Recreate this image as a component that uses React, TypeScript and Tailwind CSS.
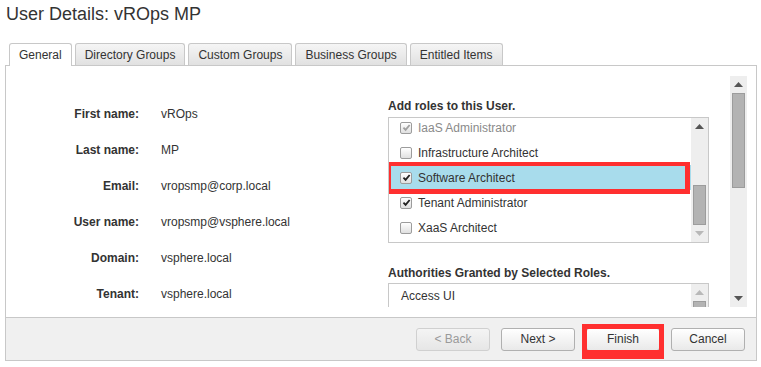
const tabs = ["General", "Directory Groups", "Custom Groups", "Business Groups", "Entitled Items"];

const details = [
  ["First name:", "vROps"],
  ["Last name:", "MP"],
  ["Email:", "vropsmp@corp.local"],
  ["User name:", "vropsmp@vsphere.local"],
  ["Domain:", "vsphere.local"],
  ["Tenant:", "vsphere.local"],
];

const roles = [
  { name: "IaaS Administrator", checked: true, disabled: true },
  { name: "Infrastructure Architect", checked: false },
  { name: "Software Architect", checked: true, selected: true },
  { name: "Tenant Administrator", checked: true },
  { name: "XaaS Architect", checked: false },
];

const Check = ({ checked, disabled }: { checked: boolean; disabled?: boolean }) => (
  <span className="w-[12px] h-[12px] shrink-0 rounded-[2px] border border-[#9c9c9c] bg-linear-to-b from-white to-[#e0e0e0] flex items-center justify-center">
    {checked && (
      <svg viewBox="0 0 10 10" className="w-[9px] h-[9px]">
        <path d="M1.6 5.2 L4 7.7 L8.5 2.2" fill="none" stroke={disabled ? "#a0a0a0" : "#222"} strokeWidth="2" />
      </svg>
    )}
  </span>
);

const Arrow = ({ up, light }: { up?: boolean; light?: boolean }) => (
  <svg width="9" height="5" viewBox="0 0 9 5">
    <polygon points={up ? "0,5 9,5 4.5,0" : "0,0 9,0 4.5,5"} fill={light ? "#b8b8b8" : "#555"} />
  </svg>
);

const Button = ({ label, disabled }: { label: string; disabled?: boolean }) => (
  <div
    className={`w-[74px] h-[23px] rounded-[3px] border flex items-center justify-center bg-linear-to-b ${
      disabled ? "border-[#d0d0d0] from-[#f4f4f4] to-[#e6e6e6] text-[#9a9a9a]" : "border-[#b0b0b0] from-white to-[#e9e9e9] text-[#333]"
    }`}
  >
    {label}
  </div>
);

export default function App() {
  return (
    <div className="w-[761px] h-[367px] bg-white overflow-hidden text-[12px] text-[#333] font-['Liberation_Sans',Arial,sans-serif]">
      <h1 className="pl-[6px] pt-[4px] text-[18px] leading-[20px] text-[#333]">User Details: vROps MP</h1>

      <div className="mt-[19px] pl-[9px] h-[23px] -mb-px flex items-start gap-[3px] relative z-10">
        {tabs.map((t, i) => (
          <div
            key={t}
            className={`px-[9px] flex items-center rounded-t-[3px] border border-b-0 border-[#c8c8c8] ${
              i === 0 ? "h-[23px] bg-white" : "h-[22px] bg-linear-to-b from-[#f5f5f5] to-[#e1e1e1]"
            }`}
          >
            {t}
          </div>
        ))}
      </div>

      <div className="ml-[5px] w-[752px] h-[296px] border border-[#c8c8c8] flex flex-col">
        <div className="flex-1 pt-[10px] pb-[10px] pl-[10px] pr-[9px] min-h-0">
          <div className="h-full flex overflow-hidden">
            <div className="w-[372px] shrink-0 pt-[20px]">
              {details.map(([k, v]) => (
                <div key={k} className="h-[36px] flex items-center">
                  <span className="w-[123px] text-right font-bold">{k}</span>
                  <span className="ml-[22px]">{v}</span>
                </div>
              ))}
            </div>

            <div className="w-[321px] shrink-0 pt-[23px]">
              <div className="font-bold leading-[14px] mb-[4px]">Add roles to this User.</div>
              <div className="h-[126px] border border-[#c8c8c8] flex">
                <div className="flex-1 overflow-hidden">
                  <div className="-mt-[3px]">
                    {roles.map((r) => (
                      <div
                        key={r.name}
                        className={`relative h-[25px] pl-[11px] flex items-center gap-[6px] ${r.selected ? "bg-[#a8dcec]" : ""} ${
                          r.disabled ? "text-[#8a8a8a]" : ""
                        }`}
                      >
                        <Check checked={r.checked} disabled={r.disabled} />
                        <span>{r.name}</span>
                        {r.selected && (
                          <span className="absolute left-[-3px] right-[1px] top-[-3px] bottom-[-4px] border-[5px] border-t-[4px] border-[#ff2f2f]" />
                        )}
                      </div>
                    ))}
                  </div>
                </div>
                <div className="w-[17px] bg-[#eeeeee] flex flex-col">
                  <div className="h-[17px] flex items-center justify-center">
                    <Arrow up />
                  </div>
                  <div className="flex-1" />
                  <div className="mx-[2px] h-[40px] bg-[#b3b3b3] border border-[#9c9c9c]" />
                  <div className="h-[17px] flex items-center justify-center">
                    <Arrow light />
                  </div>
                </div>
              </div>

              <div className="mt-[23px] font-bold leading-[14px] mb-[3px]">Authorities Granted by Selected Roles.</div>
              <div className="h-[60px] border border-[#c8c8c8] flex">
                <div className="flex-1 pl-[12px] h-[24px] flex items-center">Access UI</div>
                <div className="w-[17px] bg-[#eeeeee] flex flex-col">
                  <div className="h-[17px] flex items-center justify-center">
                    <Arrow up light />
                  </div>
                  <div className="mx-[2px] h-[30px] bg-[#b3b3b3] border border-[#9c9c9c]" />
                </div>
              </div>
            </div>

            <div className="ml-auto w-[17px] shrink-0 bg-[#eeeeee] flex flex-col">
              <div className="h-[17px] flex items-center justify-center">
                <Arrow up />
              </div>
              <div className="mx-[2px] h-[95px] bg-[#b3b3b3] border border-[#9c9c9c]" />
              <div className="flex-1" />
              <div className="h-[17px] flex items-center justify-center">
                <Arrow />
              </div>
            </div>
          </div>
        </div>

        <div className="h-[43px] shrink-0 bg-[#f0f0f0] border-t border-[#c8c8c8] flex items-center justify-end gap-[11px] pr-[11px]">
          <Button label="< Back" disabled />
          <Button label="Next >" />
          <div className="relative">
            <Button label="Finish" />
            <span className="absolute left-[-4px] right-[-4px] top-[-4px] bottom-[-8px] border-[5px] border-b-[9px] border-[#ff2f2f]" />
          </div>
          <Button label="Cancel" />
        </div>
      </div>
    </div>
  );
}
